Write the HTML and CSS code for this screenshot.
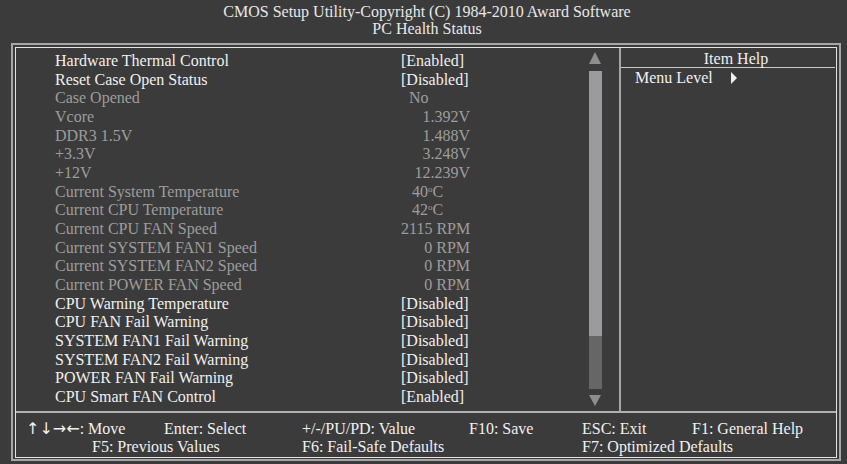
FILE: index.html
```html
<!DOCTYPE html>
<html lang="en">
<head>
    <meta charset="UTF-8">
    <title>PC Health Status</title>
    <link rel="stylesheet" href="styles.css">
</head>
<body>
    <div class="title">
        <div>CMOS Setup Utility-Copyright (C) 1984-2010 Award Software</div>
        <div>PC Health Status</div>
    </div>
    <div class="frame">
        <div class="inner">
            <div class="main">
                <div class="left">
                    <div class="list">
                        <div class="row"><span class="label">Hardware Thermal Control</span><span class="value">[Enabled]</span></div>
                        <div class="row"><span class="label">Reset Case Open Status</span><span class="value">[Disabled]</span></div>
                        <div class="row dim"><span class="label">Case Opened</span><span class="value no">No</span></div>
                        <div class="row dim"><span class="label">Vcore</span><span class="value num">1.392V</span></div>
                        <div class="row dim"><span class="label">DDR3 1.5V</span><span class="value num">1.488V</span></div>
                        <div class="row dim"><span class="label">+3.3V</span><span class="value num">3.248V</span></div>
                        <div class="row dim"><span class="label">+12V</span><span class="value num">12.239V</span></div>
                        <div class="row dim"><span class="label">Current System Temperature</span><span class="value temp">40<sup>o</sup>C</span></div>
                        <div class="row dim"><span class="label">Current CPU Temperature</span><span class="value temp">42<sup>o</sup>C</span></div>
                        <div class="row dim"><span class="label">Current CPU FAN Speed</span><span class="value num">2115 RPM</span></div>
                        <div class="row dim"><span class="label">Current SYSTEM FAN1 Speed</span><span class="value num">0 RPM</span></div>
                        <div class="row dim"><span class="label">Current SYSTEM FAN2 Speed</span><span class="value num">0 RPM</span></div>
                        <div class="row dim"><span class="label">Current POWER FAN Speed</span><span class="value num">0 RPM</span></div>
                        <div class="row"><span class="label">CPU Warning Temperature</span><span class="value">[Disabled]</span></div>
                        <div class="row"><span class="label">CPU FAN Fail Warning</span><span class="value">[Disabled]</span></div>
                        <div class="row"><span class="label">SYSTEM FAN1 Fail Warning</span><span class="value">[Disabled]</span></div>
                        <div class="row"><span class="label">SYSTEM FAN2 Fail Warning</span><span class="value">[Disabled]</span></div>
                        <div class="row"><span class="label">POWER FAN Fail Warning</span><span class="value">[Disabled]</span></div>
                        <div class="row"><span class="label">CPU Smart FAN Control</span><span class="value">[Enabled]</span></div>
                    </div>
                    <div class="scrollbar">
                        <div class="arrow-up"></div>
                        <div class="thumb"></div>
                        <div class="track"></div>
                        <div class="arrow-down"></div>
                    </div>
                </div>
                <div class="help">
                    <div class="help-head">Item Help</div>
                    <div class="help-line">Menu Level<span class="caret"></span></div>
                </div>
            </div>
            <div class="footer">
                <span class="c1"><span class="arrows">&uarr;&darr;&rarr;&larr;</span>: Move</span>
                <span class="c2">Enter: Select</span>
                <span class="c3">+/-/PU/PD: Value</span>
                <span class="c4">F10: Save</span>
                <span class="c5">ESC: Exit</span>
                <span class="c6">F1: General Help</span>
                <span class="f5">F5: Previous Values</span>
                <span class="f6">F6: Fail-Safe Defaults</span>
                <span class="f7">F7: Optimized Defaults</span>
            </div>
        </div>
    </div>
</body>
</html>
```

FILE: styles.css
```css
html, body {
    margin: 0;
    height: 100%;
    overflow: hidden;
    background-color: #3b3b3b;
    color: #f0f0f0;
    font-family: "Liberation Serif", "Times New Roman", serif;
    font-size: 16px;
}
.title {
    height: 43px;
    box-sizing: border-box;
    padding: 3px 0 0 7px;
    text-align: center;
    line-height: 17px;
    color: #e8e8e8;
}
.frame {
    margin: 0 6px 0 11px;
    height: 418px;
    box-sizing: border-box;
    border: 2px solid #a6a6a6;
    padding: 2px 2px 1px 2px;
}
.inner {
    height: 100%;
    box-sizing: border-box;
    border: 1px solid #e2e2e2;
    display: flex;
    flex-direction: column;
}
.main {
    height: 363px;
    display: flex;
}
.left {
    width: 603px;
    display: flex;
}
.list {
    width: 573px;
    box-sizing: border-box;
    padding: 4px 0 0 39px;
}
.row {
    display: flex;
    height: 18.67px;
    line-height: 18.67px;
    white-space: nowrap;
}
.row.dim { color: #9d9d9d; }
.label { width: 346px; }
.value { width: 69px; }
.value.num { text-align: right; }
.value.no { padding-left: 8px; }
.value.temp { padding-left: 11px; }
sup {
    font-size: 9px;
    vertical-align: 0;
    position: relative;
    top: -5px;
}
.scrollbar {
    width: 13px;
    padding-top: 4px;
}
.arrow-up {
    width: 0;
    height: 0;
    border-left: 6.5px solid transparent;
    border-right: 6.5px solid transparent;
    border-bottom: 12px solid #8e8e8e;
}
.thumb {
    margin-top: 7px;
    height: 265px;
    background-color: #9b9b9d;
}
.track {
    height: 53px;
    background-color: #666666;
}
.arrow-down {
    margin-top: 6px;
    width: 0;
    height: 0;
    border-left: 6.5px solid transparent;
    border-right: 6.5px solid transparent;
    border-top: 11px solid #8e8e8e;
}
.help {
    flex: 1;
    border-left: 2px solid #a6a6a6;
}
.help-head {
    margin-right: 1px;
    padding: 2px 0 0 16px;
    height: 17px;
    line-height: 18px;
    text-align: center;
    border-bottom: 1px solid #c8c8c8;
}
.help-line {
    padding: 1px 0 0 14px;
    line-height: 18px;
}
.caret {
    display: inline-block;
    margin-left: 18px;
    width: 0;
    height: 0;
    border-top: 6px solid transparent;
    border-bottom: 6px solid transparent;
    border-left: 6px solid #f0f0f0;
    vertical-align: -1px;
}
.footer {
    flex: 1;
    border-top: 2px solid #b0b0b0;
    padding: 7px 0 0 10px;
    display: grid;
    grid-template-columns: 138px 138px 167px 113px 110px auto;
    grid-auto-rows: 18px;
    white-space: nowrap;
}
.arrows {
    font-family: "DejaVu Sans", sans-serif;
    font-size: 16px;
    line-height: 18px;
}
.f5 { grid-column: 1 / 3; padding-left: 66px; }
.f6 { grid-column: 3 / 5; }
.f7 { grid-column: 5 / 7; }
```
